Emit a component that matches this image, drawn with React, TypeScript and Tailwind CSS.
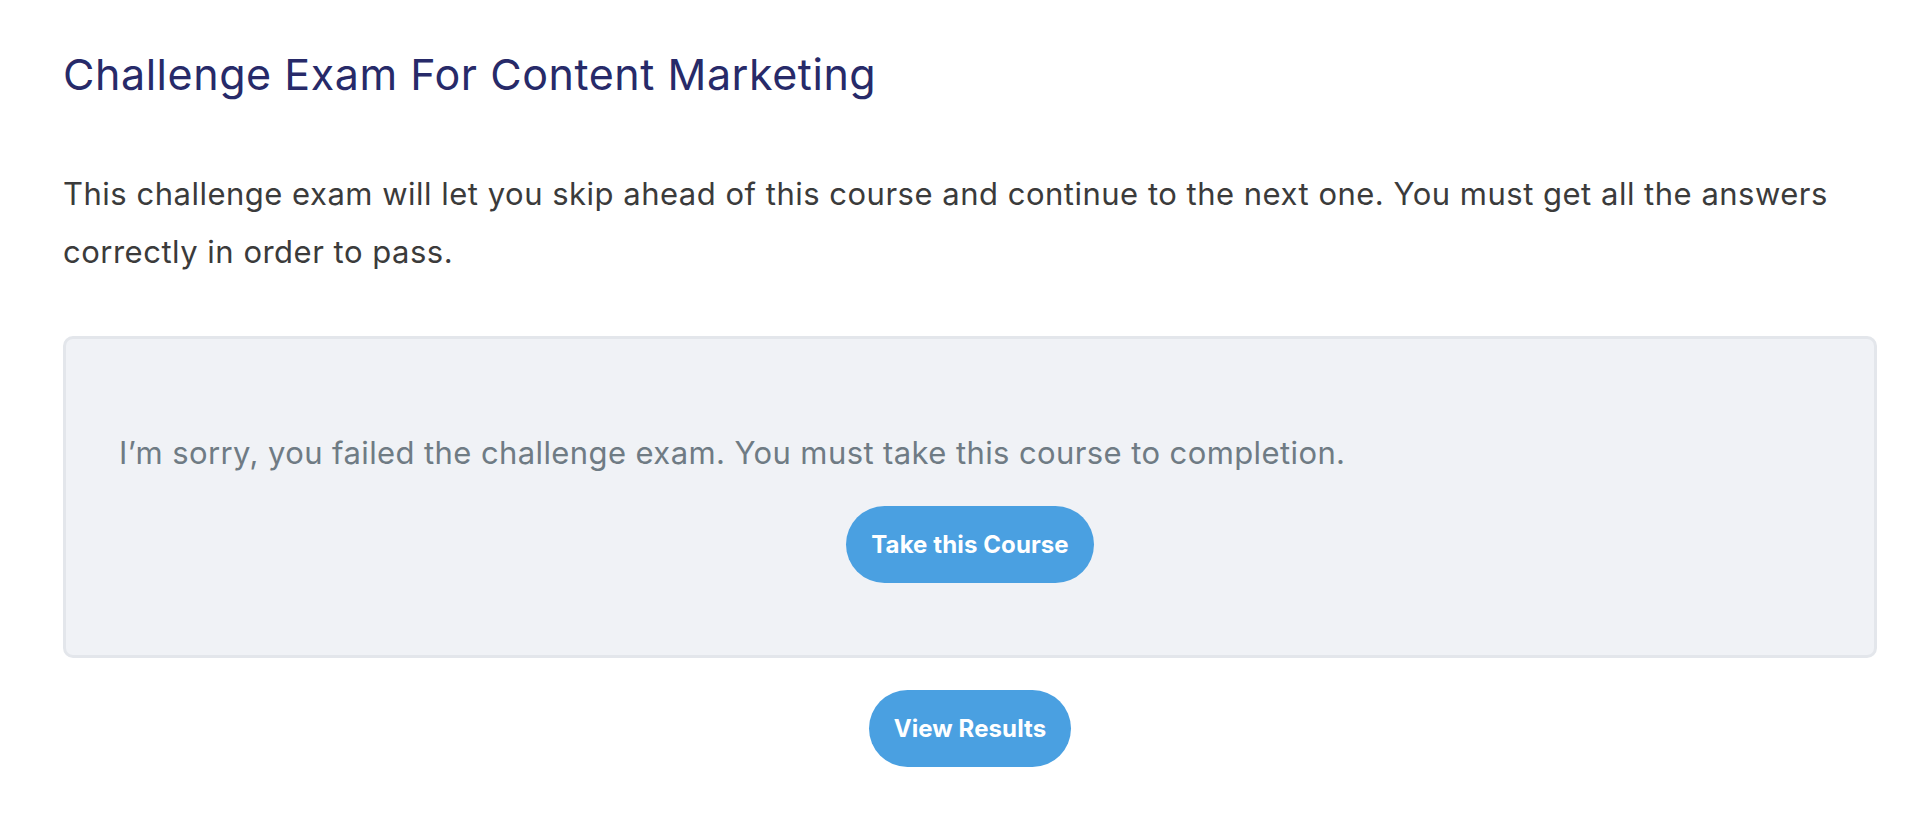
export default function App() {
  return (
    <div className="min-h-screen bg-white pl-[63px] pr-[55px] pt-[49px] font-['Inter',sans-serif]">
      <h1 className="text-[43px] leading-[50px] font-normal tracking-[0.55px] text-[#272a69]">
        Challenge Exam For Content Marketing
      </h1>

      <p className="mt-[66px] text-[31px] leading-[58px] tracking-[0.5px] text-[#3b3b3b]">
        This challenge exam will let you skip ahead of this course and continue to the next one. You must get all the
        answers correctly in order to pass.
      </p>

      <div className="mt-[55px] rounded-[10px] border-[3px] border-[#e3e6eb] bg-[#f0f2f6] px-[53px] pt-[91px] pb-[72px]">
        <p className="text-[31px] leading-[45px] tracking-[0.4px] text-[#6f7b84]">
          I’m sorry, you failed the challenge exam. You must take this course to completion.
        </p>
        <div className="mt-[31px] flex justify-center">
          <button className="h-[77px] rounded-full bg-[#4aa0e1] px-[25px] text-[24px] font-bold tracking-[0.1px] text-white">
            Take this Course
          </button>
        </div>
      </div>

      <div className="mt-[32px] flex justify-center">
        <button className="h-[77px] rounded-full bg-[#4aa0e1] px-[25px] text-[24px] font-bold tracking-[0.1px] text-white">
          View Results
        </button>
      </div>
    </div>
  );
}
